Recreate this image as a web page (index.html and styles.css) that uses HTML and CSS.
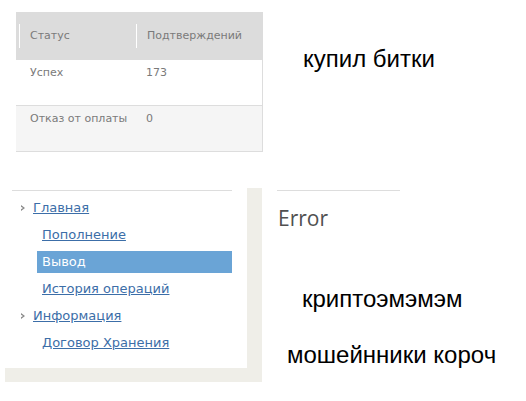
FILE: index.html
```html
<!DOCTYPE html>
<html lang="ru">
<head>
    <meta charset="UTF-8">
    <title>Вывод</title>
    <link rel="stylesheet" href="styles.css">
</head>
<body>
    <div class="top">
        <table class="orders">
            <thead>
                <tr>
                    <th class="col-status"><div>Статус</div></th>
                    <th><div>Подтверждений</div></th>
                </tr>
            </thead>
            <tbody>
                <tr>
                    <td>Успех</td>
                    <td>173</td>
                </tr>
                <tr class="alt">
                    <td>Отказ от оплаты</td>
                    <td>0</td>
                </tr>
            </tbody>
        </table>
        <div class="caption caption-first">купил битки</div>
    </div>

    <div class="bottom">
        <div class="panel">
            <ul class="menu">
                <li class="section"><a href="#">Главная</a></li>
                <li class="sub"><a href="#">Пополнение</a></li>
                <li class="sub active"><a href="#">Вывод</a></li>
                <li class="sub"><a href="#">История операций</a></li>
                <li class="section"><a href="#">Информация</a></li>
                <li class="sub"><a href="#">Договор Хранения</a></li>
            </ul>
        </div>
        <div class="content">
            <h2 class="error">Error</h2>
            <div class="caption caption-second">криптоэмэмэм</div>
            <div class="caption caption-third">мошейнники короч</div>
        </div>
    </div>
</body>
</html>
```

FILE: styles.css
```css
body {
    margin: 0;
    background: #fff;
    font-family: "DejaVu Sans", Verdana, sans-serif;
}
.top {
    display: flex;
    align-items: flex-start;
    height: 188px;
    padding: 12px 0 0 16px;
    box-sizing: border-box;
}
.orders {
    width: 247px;
    table-layout: fixed;
    border-collapse: collapse;
    font-size: 11px;
    color: #7a7a7a;
}
.orders th {
    background: #dcdcdc;
    font-weight: normal;
    text-align: left;
    padding: 12px 0 12px 3px;
    height: 24px;
}
.orders th div {
    border-left: 1px solid #fff;
    padding-left: 10px;
    line-height: 24px;
    white-space: nowrap;
}
.orders .col-status {
    width: 114px;
}
.orders td {
    height: 39px;
    padding: 6px 10px 0 13px;
    vertical-align: top;
    line-height: 14px;
    white-space: nowrap;
    border-right: 1px solid #ddd;
}
.orders td:first-child {
    border-right: none;
    padding-left: 14px;
}
.orders .alt td {
    background: #f5f5f5;
    border-top: 1px solid #ddd;
    border-bottom: 1px solid #ddd;
}
.caption {
    font-family: "Liberation Sans", Arial, sans-serif;
    font-size: 24px;
    color: #000;
}
.caption-first {
    margin: 33px 0 0 40px;
}
.bottom {
    display: flex;
    align-items: flex-start;
    padding-left: 5px;
}
.panel {
    background: #efeee8;
    padding: 0 15px 14px 0;
}
.menu {
    list-style: none;
    width: 242px;
    margin: 0;
    padding: 2px 0 11px;
    background: #fff;
    box-sizing: border-box;
}
.menu::before {
    content: "";
    display: block;
    margin: 0 15px 4px 7px;
    border-top: 1px solid #ddd;
}
.menu li {
    padding: 2px 15px 3px 0;
}
.menu a {
    display: block;
    line-height: 22px;
    font-size: 13px;
    color: #3c6ea8;
}
.menu .section a {
    position: relative;
    margin-left: 28px;
}
.menu .section a::before {
    content: "";
    position: absolute;
    left: -12px;
    top: 8px;
    width: 4px;
    height: 6px;
    background: #8a8a8a;
    clip-path: polygon(0 0, 100% 50%, 0 100%, 0 70%, 50% 50%, 0 30%);
}
.menu .sub a {
    margin-left: 32px;
    padding-left: 5px;
}
.menu .active a {
    background: #6aa4d6;
    color: #fff;
    text-decoration: none;
}
.content {
    margin-left: 15px;
    padding-top: 2px;
}
.content::before {
    content: "";
    display: block;
    width: 123px;
    border-top: 1px solid #ddd;
}
.error {
    margin: 13px 0 0 1px;
    font-family: "Open Sans", sans-serif;
    font-weight: normal;
    font-size: 21px;
    line-height: 28px;
    color: #505050;
}
.caption-second {
    margin: 53px 0 0 25px;
}
.caption-third {
    margin: 28px 0 0 10px;
}
```
